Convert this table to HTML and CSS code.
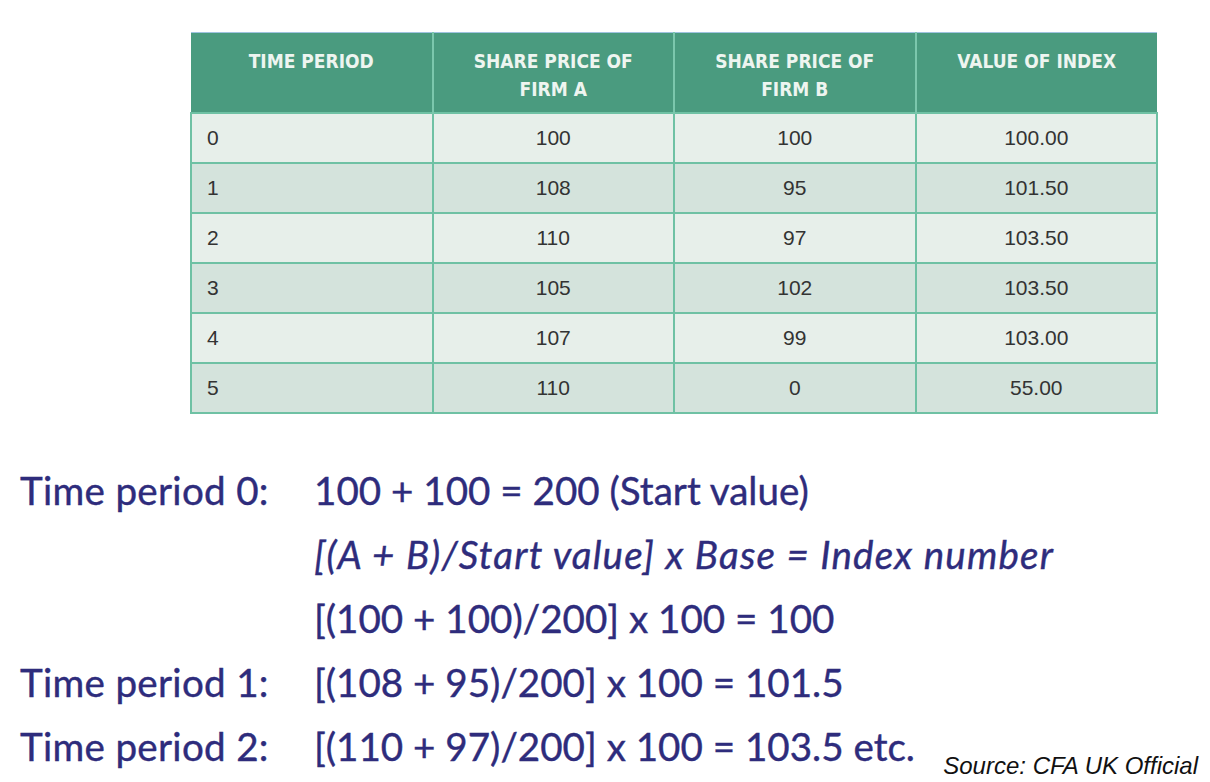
FILE: index.html
```html
<!DOCTYPE html>
<html>
<head>
<meta charset="utf-8">
<link rel="stylesheet" href="styles.css">
</head>
<body>
<div class="page">
  <table class="idx">
    <thead>
      <tr>
        <th>TIME PERIOD</th>
        <th>SHARE PRICE OF<br>FIRM A</th>
        <th>SHARE PRICE OF<br>FIRM B</th>
        <th>VALUE OF INDEX</th>
      </tr>
    </thead>
    <tbody>
      <tr class="odd"><td>0</td><td>100</td><td>100</td><td>100.00</td></tr>
      <tr class="even"><td>1</td><td>108</td><td>95</td><td>101.50</td></tr>
      <tr class="odd"><td>2</td><td>110</td><td>97</td><td>103.50</td></tr>
      <tr class="even"><td>3</td><td>105</td><td>102</td><td>103.50</td></tr>
      <tr class="odd"><td>4</td><td>107</td><td>99</td><td>103.00</td></tr>
      <tr class="even"><td>5</td><td>110</td><td>0</td><td>55.00</td></tr>
    </tbody>
  </table>

  <div class="calc">
    <div class="line"><span class="lbl">Time period 0:</span><span class="f">100 + 100 = 200 (Start value)</span></div>
    <div class="line"><span class="lbl"></span><span class="f it">[(A + B)/Start value] x Base = Index number</span></div>
    <div class="line"><span class="lbl"></span><span class="f">[(100 + 100)/200] x 100 = 100</span></div>
    <div class="line"><span class="lbl">Time period 1:</span><span class="f">[(108 + 95)/200] x 100 = 101.5</span></div>
    <div class="line"><span class="lbl">Time period 2:</span><span class="f">[(110 + 97)/200] x 100 = 103.5 etc.</span><span class="src">Source: CFA UK Official</span></div>
  </div>
</div>
</body>
</html>
```

FILE: styles.css
```css
html, body {
  margin: 0;
  padding: 0;
  background: #ffffff;
}

.page {
  width: 1210px;
  height: 782px;
  overflow: hidden;
  padding-top: 32px;
  box-sizing: border-box;
}

.idx {
  margin-left: 190px;
  width: 968px;
  border-collapse: collapse;
  table-layout: fixed;
  border-top: 1px solid #9fc3e0;
}

.idx th {
  background: #4a9b7f;
  color: #eef5f0;
  font-family: "DejaVu Sans Condensed", "DejaVu Sans", sans-serif;
  font-stretch: condensed;
  font-weight: bold;
  font-size: 19px;
  line-height: 28px;
  height: 80px;
  vertical-align: top;
  padding: 14px 0 0 0;
  box-sizing: border-box;
  text-align: center;
  border-left: 2px solid #7cc7ad;
}

.idx th:first-child {
  border-left: none;
}

.idx td {
  font-family: "Liberation Sans", Arial, sans-serif;
  font-size: 21px;
  color: #333333;
  height: 50px;
  padding: 0;
  box-sizing: border-box;
  text-align: center;
  border: 2px solid #6fc1a4;
}

.idx td:first-child {
  text-align: left;
  padding-left: 15px;
}

.idx tr.odd td {
  background: #e7efea;
}

.idx tr.even td {
  background: #d4e3dc;
}

.calc {
  margin-top: 44px;
  font-family: Lato, "Open Sans", sans-serif;
  font-size: 38.6px;
  color: #2e2c7c;
  -webkit-text-stroke: 0.4px #2e2c7c;
}

.line {
  display: flex;
  align-items: flex-end;
  height: 64px;
  line-height: 64px;
}

.lbl {
  width: 314px;
  padding-left: 20px;
  box-sizing: border-box;
  flex: none;
  letter-spacing: 0.3px;
}

.f {
  white-space: nowrap;
}

.it {
  font-style: italic;
  letter-spacing: 1.2px;
}

.src {
  margin-left: auto;
  margin-right: 12px;
  font-family: "Liberation Sans", Arial, sans-serif;
  font-style: italic;
  font-size: 24px;
  line-height: 24px;
  color: #111111;
  -webkit-text-stroke: 0;
  letter-spacing: 0;
  padding-bottom: 0;
}
```
